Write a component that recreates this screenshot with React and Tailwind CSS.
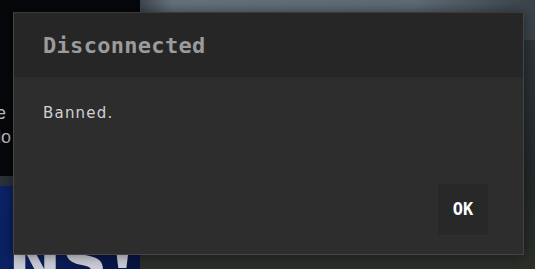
export default function App() {
  return (
    <div className="relative w-[535px] h-[269px] overflow-hidden bg-[#0a0c10]">
      {/* scène derrière la fenêtre */}
      <div className="absolute inset-0 flex">
        <div className="w-[140px] flex flex-col">
          <div className="h-[176px] bg-[#05070a] relative">
            <span className="absolute left-[-4px] top-[100px] text-[18px] text-[#b9bcc0] font-['Liberation_Sans',sans-serif]">e</span>
            <span className="absolute left-[-3px] top-[124px] text-[18px] text-[#b9bcc0] font-['Liberation_Sans',sans-serif]">lo</span>
          </div>
          <div className="h-[10px] bg-[#2a3138]" />
          <div className="flex-1 bg-[linear-gradient(100deg,#0b2368,#0a1a50_60%,#081540)] relative">
            <span className="absolute left-[8px] top-[44px] text-[64px] leading-none font-bold text-[#c9ccd4] font-['DejaVu_Sans',sans-serif]">NS!</span>
          </div>
        </div>
        <div className="flex-1 flex flex-col">
          <div className="h-[40px] bg-[linear-gradient(90deg,#3f4750,#66727c_8%,#5f6b75_70%,#3a434a)]" />
          <div className="flex-1 bg-[linear-gradient(180deg,#2e3439,#23282a_60%,#2b2f28)]" />
        </div>
      </div>

      {/* fenêtre */}
      <div className="absolute left-[13px] top-[12px] w-[511px] h-[243px] flex flex-col bg-[#2d2d2d] border border-[#454545] border-t-[#3a3a3a] shadow-[0_0_12px_rgba(0,0,0,0.5)]">
        <div className="h-[64px] shrink-0 bg-[#262626] flex items-center pl-[29px]">
          <h1 className="text-[22px] font-bold text-[#9b9b9b] font-['DejaVu_Sans_Mono',monospace] tracking-[0.3px]">
            Disconnected
          </h1>
        </div>
        <div className="flex-1 flex flex-col px-[29px] pt-[25px]">
          <p className="text-[15px] text-[#d2d2d2] tracking-[1.2px] font-['DejaVu_Sans',sans-serif]">Banned.</p>
          <div className="mt-auto mb-[19px] mr-[6px] self-end">
            <button className="w-[50px] h-[51px] bg-[#282828] flex items-center justify-center text-[17px] font-bold text-white font-['DejaVu_Sans_Mono',monospace]">
              OK
            </button>
          </div>
        </div>
      </div>
    </div>
  );
}
